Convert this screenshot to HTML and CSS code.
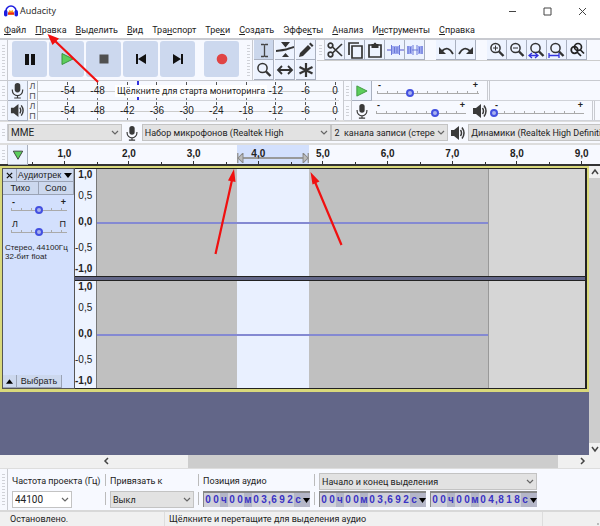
FILE: index.html
```html
<!DOCTYPE html>
<html lang="ru">
<head>
<meta charset="utf-8">
<title>Audacity</title>
<link rel="stylesheet" href="styles.css">
</head>
<body>
<svg class="defs" aria-hidden="true">
  <symbol id="mic" viewBox="0 0 16 18"><rect x="5" y="1" width="6" height="10" rx="3" fill="#3a3a3a"/><path d="M2.500 8v1a5.500 5.500 0 0 0 11 0V8M8 14v3M4.500 17h7" fill="none" stroke="#3a3a3a" stroke-width="1.300"/></symbol>
  <symbol id="speaker" viewBox="0 0 16 16"><path d="M1 5h3l5-4v14l-5-4H1z" fill="#3a3a3a"/><path d="M10.500 5q2 3 0 6M12 2.500q4 5.500 0 11" fill="none" stroke="#3a3a3a" stroke-width="1.500"/></symbol>
  <symbol id="lens" viewBox="0 0 18 18"><circle cx="7.500" cy="7" r="4.600" fill="none" stroke="#333" stroke-width="1.500"/><path d="M11 10.500l4.500 4.500" stroke="#333" stroke-width="2.400"/></symbol>
  <symbol id="play" viewBox="0 0 14 14"><path d="M2 1.500L13 7 2 12.500z" fill="#5cce5c" stroke="#3a963e"/></symbol>
  <symbol id="chev" viewBox="0 0 8 6"><path d="M1 1l3 3 3-3" fill="none" stroke="#666" stroke-width="1.200"/></symbol>
</svg>

<header class="titlebar">
  <svg class="logo" viewBox="0 0 14 12"><path d="M2 7V6a5 5 0 0 1 10 0v1" fill="none" stroke="#1d1de0" stroke-width="1.600"/><rect y="5" width="3.500" height="6.500" rx="1.700" fill="#1d1de0"/><rect x="10.500" y="5" width="3.500" height="6.500" rx="1.700" fill="#1d1de0"/><path d="M4 8l1.500-3 1.500 1 1.500-1L10 8v2H4z" fill="#f6a51c"/><path d="M4 8.500h6" stroke="#e22" stroke-width="2"/></svg>
  <span class="app-name">Audacity</span>
  <button class="win" aria-label="Свернуть"><svg viewBox="0 0 9 9"><path d="M1 4.500h7"/></svg></button>
  <button class="win" aria-label="Развернуть"><svg viewBox="0 0 9 9"><path d="M1 1h7v7H1z"/></svg></button>
  <button class="win" aria-label="Закрыть"><svg viewBox="0 0 9 9"><path d="M1 1l7 7M8 1L1 8"/></svg></button>
</header>

<nav class="menu">
  <a href="#"><u>Ф</u>айл</a><a href="#"><u>П</u>равка</a><a href="#"><u>В</u>ыделить</a><a href="#"><u>В</u>ид</a><a href="#">Тра<u>н</u>спорт</a><a href="#">Тре<u>к</u>и</a><a href="#"><u>С</u>оздать</a><a href="#">Эффе<u>к</u>ты</a><a href="#"><u>А</u>нализ</a><a href="#">И<u>н</u>струменты</a><a href="#"><u>С</u>правка</a>
</nav>

<section class="toolbar">
  <div class="grip"></div>
  <div class="transport">
    <button aria-label="Пауза"><svg viewBox="0 0 14 14"><path d="M2 2h4v11H2zM8 2h4v11H8z" fill="#111"/></svg></button>
    <button aria-label="Воспроизвести"><svg viewBox="0 0 14 14"><use href="#play"/></svg></button>
    <button aria-label="Стоп"><svg viewBox="0 0 14 14"><path d="M2.500 2.500h9v9h-9z" fill="#505050"/></svg></button>
    <button aria-label="В начало"><svg viewBox="0 0 14 14"><path d="M2 2h2v10H2zM12 2v10L4 7z" fill="#111"/></svg></button>
    <button aria-label="В конец"><svg viewBox="0 0 14 14"><path d="M10 2h2v10h-2zM2 2v10l8-5z" fill="#111"/></svg></button>
    <button class="record" aria-label="Записать"><svg viewBox="0 0 14 14"><circle cx="7" cy="7" r="5.300" fill="#e04444"/></svg></button>
  </div>
  <div class="grip"></div>
  <div class="tools">
    <button class="tool on" aria-label="Выделение"><svg viewBox="0 0 18 18"><path d="M6 3.500h2.500L9.500 4l1-.5H13M9.500 4v11M6 15.500h2.500l1-.5 1 .5H13" fill="none" stroke="#444" stroke-width="1.300"/></svg></button>
    <button class="tool" aria-label="Огибающая"><svg viewBox="0 0 18 18"><path d="M5 1h9L9.500 6.500zM9.500 12l3.500 4H6z" fill="#333"/><path d="M0 10q8-1 10-1.500T18 6" fill="none" stroke="#333" stroke-width="2"/></svg></button>
    <button class="tool" aria-label="Рисование"><svg viewBox="0 0 18 18"><path d="M2 16l1-4 8-8 3 3-8 8zM12 3l1.500-1.500 3 3L15 6z" fill="#333"/></svg></button>
    <button class="tool" aria-label="Масштаб"><svg viewBox="0 0 18 18"><use href="#lens"/></svg></button>
    <button class="tool" aria-label="Сдвиг"><svg viewBox="0 0 18 18"><path d="M3 9h12M6 5L2 9l4 4M12 5l4 4-4 4" fill="none" stroke="#333" stroke-width="1.800"/></svg></button>
    <button class="tool" aria-label="Мультиинструмент"><svg viewBox="0 0 18 18"><path d="M9 2v14M2.500 6l13 6.500M15.500 6l-13 6.500" stroke="#333" stroke-width="2.200"/></svg></button>
  </div>
  <div class="edit-side">
    <div class="edit-row">
      <div class="grip"></div>
      <div class="group">
        <button class="tool" aria-label="Вырезать"><svg viewBox="0 0 18 18"><g fill="none" stroke="#333" stroke-width="1.700"><circle cx="4.500" cy="4.500" r="2.300"/><circle cx="4.500" cy="13.500" r="2.300"/><path d="M6.500 6L16 15M6.500 12L16 3"/></g></svg></button>
        <button class="tool" aria-label="Копировать"><svg viewBox="0 0 18 18"><path d="M6 5h10v12H6zM3 14V2h10" fill="none" stroke="#333" stroke-width="1.700"/></svg></button>
        <button class="tool" aria-label="Вставить"><svg viewBox="0 0 18 18"><path d="M3 4h12v12H3z" fill="none" stroke="#333" stroke-width="1.700"/><path d="M5.500 3h2q1.500-3 3 0h2v4h-7z" fill="#333"/></svg></button>
        <button class="tool" aria-label="Обрезать"><svg viewBox="0 0 18 18"><path d="M1 9h4M14 9h4" stroke="#55c"/><path d="M5 5h9v8H5z" fill="#9ea9f0"/><path d="M5.500 4v10M8.500 6v6M11 6v6M13.500 4v10" stroke="#6b78d8"/></svg></button>
        <button class="tool" aria-label="Тишина"><svg viewBox="0 0 18 18"><path d="M1 5h5v8H1zM12 5h5v8h-5z" fill="#9ea9f0"/><path d="M6 9h6M2 5v8M4.500 6v6M7 4v10M11 4v10M13.500 6v6M16 5v8" stroke="#6b78d8"/></svg></button>
      </div>
      <div class="group">
        <button class="tool" aria-label="Отменить"><svg viewBox="0 0 18 18"><path d="M5 10q6-6 11 3" fill="none" stroke="#333" stroke-width="1.800"/><path d="M2 6v7h7z" fill="#333"/></svg></button>
        <button class="tool" aria-label="Повторить"><svg viewBox="0 0 18 18"><path d="M13 10Q7 4 2 13" fill="none" stroke="#333" stroke-width="1.800"/><path d="M16 6v7H9z" fill="#333"/></svg></button>
      </div>
      <div class="group">
        <button class="tool" aria-label="Приблизить"><svg viewBox="0 0 18 18"><use href="#lens"/><path d="M5 7h5M7.500 4.500v5" stroke="#333"/></svg></button>
        <button class="tool" aria-label="Отдалить"><svg viewBox="0 0 18 18"><use href="#lens"/><path d="M5 7h5" stroke="#333"/></svg></button>
        <button class="tool" aria-label="Масштаб по выделению"><svg viewBox="0 0 18 18"><use href="#lens"/><path d="M1 14.500h9M4 12l-3 2.500L4 17M7 12l3 2.500L7 17" fill="none" stroke="#33d" stroke-width="1.300"/></svg></button>
        <button class="tool" aria-label="Весь проект"><svg viewBox="0 0 18 18"><use href="#lens"/><path d="M1 14.500h10M1 12v5M11 12v5" fill="none" stroke="#33d" stroke-width="1.300"/></svg></button>
        <button class="tool" aria-label="Переключить масштаб"><svg viewBox="0 0 18 18"><g fill="none" stroke="#222" stroke-width="1.700"><circle cx="10" cy="6" r="3.500"/><circle cx="6.500" cy="9" r="3.300"/><path d="M12 8.500l4 4M9 11l4 4"/></g></svg></button>
      </div>
    </div>
  </div>
</section>

<section class="meters">
  <div class="meter-list">
    <div class="meter-row">
      <div class="grip"></div>
      <button class="tool" aria-label="Уровень записи"><svg viewBox="0 0 16 18"><use href="#mic"/></svg></button>
      <div class="lr"><span>Л</span><span>П</span></div>
      <div class="scale peak"><div class="marks"><span>-54</span><span>-48</span><span></span><span></span><span></span><span></span><span></span><span>-12</span><span>-6</span><span>0</span></div><button class="monitor">Щёлкните для старта мониторинга</button></div>
    </div>
    <div class="meter-row">
      <div class="grip"></div>
      <button class="tool" aria-label="Уровень воспроизведения"><svg viewBox="0 0 16 16"><use href="#speaker"/></svg></button>
      <div class="lr"><span>Л</span><span>П</span></div>
      <div class="scale"><div class="marks"><span>-54</span><span>-48</span><span>-42</span><span>-36</span><span>-30</span><span>-24</span><span>-18</span><span>-12</span><span>-6</span><span>0</span></div></div>
    </div>
  </div>
  <div class="mixer">
    <div class="mix-row">
      <div class="grip"></div>
      <button class="tool" aria-label="Воспроизвести на скорости"><svg viewBox="0 0 14 14"><use href="#play"/></svg></button>
      <label class="slider speed"><span class="ends"><b>-</b><b>+</b></span><input type="range" min="0" max="100" value="32" aria-label="Скорость"></label>
      <div class="stop"></div>
    </div>
    <div class="mix-row">
      <div class="grip"></div>
      <svg class="pic" viewBox="0 0 16 18"><use href="#mic"/></svg>
      <label class="slider"><span class="ends"><b>-</b><b>+</b></span><input type="range" min="0" max="100" value="66" aria-label="Громкость записи"></label>
      <svg class="pic" viewBox="0 0 16 16"><use href="#speaker"/></svg>
      <label class="slider"><span class="ends"><b>-</b><b>+</b></span><input type="range" min="0" max="100" value="0" aria-label="Громкость воспроизведения"></label>
      <div class="stop"></div>
    </div>
  </div>
</section>

<section class="devices">
  <div class="grip"></div>
  <div class="drop host"><select aria-label="Аудиоинтерфейс"><option>MME</option></select><svg><use href="#chev"/></svg></div>
  <svg class="pic" viewBox="0 0 16 18"><use href="#mic"/></svg>
  <div class="drop input"><select aria-label="Устройство записи"><option>Набор микрофонов (Realtek High</option></select><svg><use href="#chev"/></svg></div>
  <div class="drop channels"><select aria-label="Каналы записи"><option>2&nbsp; канала записи (стерес</option></select><svg><use href="#chev"/></svg></div>
  <svg class="pic" viewBox="0 0 16 16"><use href="#speaker"/></svg>
  <div class="drop output"><select aria-label="Устройство воспроизведения"><option>Динамики (Realtek High Definition)</option></select></div>
</section>

<section class="timeline">
  <div class="grip"></div>
  <button class="tool" aria-label="Закрепить указатель"><svg viewBox="0 0 14 14"><path d="M1.500 2.500h11L7 12z" fill="#5cce5c" stroke="#333"/></svg></button>
  <div class="ruler">
    <div class="range"><svg preserveAspectRatio="none" viewBox="0 0 72 10"><path d="M.5 0v10M71.500 0v10M1 5h70" stroke="#999" stroke-width="2"/><path d="M1 5l5-5v10zM71 5l-5-5v10z" fill="#bbb" stroke="#888"/></svg></div>
    <div class="seconds"><span>1,0</span><span>2,0</span><span>3,0</span><span>4,0</span><span>5,0</span><span>6,0</span><span>7,0</span><span>8,0</span><span>9,0</span></div>
  </div>
</section>

<main class="workspace">
  <div class="canvas">
    <article class="track">
      <aside class="panel">
        <div class="panel-row"><button class="close" aria-label="Закрыть дорожку"><svg viewBox="0 0 8 8"><path d="M1 1l6 6M7 1L1 7" stroke="#111" stroke-width="1.500"/></svg></button><button class="name">Аудиотрек <svg viewBox="0 0 8 5"><path d="M0 0h8L4 5z"/></svg></button></div>
        <div class="panel-row"><button>Тихо</button><button>Соло</button></div>
        <label class="slider"><span class="ends"><b>-</b><b>+</b></span><input type="range" value="50" aria-label="Усиление"></label>
        <label class="slider"><span class="ends"><span>Л</span><span>П</span></span><input type="range" value="50" aria-label="Панорама"></label>
        <p>Стерео, 44100Гц<br>32-бит float</p>
        <div class="panel-row foot"><button class="close" aria-label="Свернуть дорожку"><svg viewBox="0 0 8 5"><path d="M0 5h8L4 0z"/></svg></button><button class="pick">Выбрать</button></div>
      </aside>
      <div class="waves">
        <div class="channel">
          <div class="levels"><b>1,0</b><span>0,5</span><b>0,0</b><span>-0,5</span><b>-1,0</b></div>
          <div class="clip"><div class="before"></div><div class="selected"></div><div class="after"></div></div>
          <div class="blank"></div>
        </div>
        <div class="channel">
          <div class="levels"><b>1,0</b><span>0,5</span><b>0,0</b><span>-0,5</span><b>-1,0</b></div>
          <div class="clip"><div class="before"></div><div class="selected"></div><div class="after"></div></div>
          <div class="blank"></div>
        </div>
      </div>
    </article>
  </div>
  <div class="vscroll"><button aria-label="Вверх"><svg viewBox="0 0 8 8"><path d="M1 6l3-4 3 4"/></svg></button><div class="thumb"></div><button aria-label="Вниз"><svg viewBox="0 0 8 8"><path d="M1 2l3 4 3-4"/></svg></button></div>
</main>

<div class="hscroll"><button aria-label="Влево"><svg viewBox="0 0 8 8"><path d="M5 1L2 4l3 3"/></svg></button><div class="track-h"></div><button aria-label="Вправо"><svg viewBox="0 0 8 8"><path d="M2 1l3 3-3 3"/></svg></button></div>

<section class="selection">
  <div class="grip"></div>
  <div class="field rate"><label for="rate">Частота проекта (Гц)</label><div class="drop white"><select id="rate"><option>44100</option></select><svg><use href="#chev"/></svg></div></div>
  <div class="bars"></div>
  <div class="field snap"><label for="snap">Привязать к</label><div class="drop"><select id="snap"><option>Выкл</option></select><svg><use href="#chev"/></svg></div></div>
  <div class="bars"></div>
  <div class="field"><span>Позиция аудио</span>
    <div class="time"><i>0</i><i>0</i><em>ч</em><i>0</i><i>0</i><em>м</em><i>0</i><i>3</i><s>,</s><i>6</i><i>9</i><i>2</i><em>с</em><button aria-label="Формат времени"><svg viewBox="0 0 7 5"><path d="M0 0h7L3.500 5z"/></svg></button></div></div>
  <div class="bars"></div>
  <div class="field span"><div class="drop"><select aria-label="Вид выделения"><option>Начало и конец выделения</option></select><svg><use href="#chev"/></svg></div>
    <div class="times">
      <div class="time"><i>0</i><i>0</i><em>ч</em><i>0</i><i>0</i><em>м</em><i>0</i><i>3</i><s>,</s><i>6</i><i>9</i><i>2</i><em>с</em><button aria-label="Формат времени"><svg viewBox="0 0 7 5"><path d="M0 0h7L3.500 5z"/></svg></button></div>
      <div class="time"><i>0</i><i>0</i><em>ч</em><i>0</i><i>0</i><em>м</em><i>0</i><i>4</i><s>,</s><i>8</i><i>1</i><i>8</i><em>с</em><button aria-label="Формат времени"><svg viewBox="0 0 7 5"><path d="M0 0h7L3.500 5z"/></svg></button></div>
    </div></div>
</section>

<footer class="status"><span class="state">Остановлено.</span><span class="hint">Щёлкните и перетащите для выделения аудио</span><span class="corner"></span></footer>

<svg class="arrows" viewBox="0 0 600 526" aria-hidden="true"><g stroke="#f01010" stroke-width="2.200"><path d="M98 82L54 40M215.500 254L232 180M341.500 245L315 182" fill="none"/></g><path d="M47.500 34l11.500 4.500-6.500 6.500zM234 169l1.500 13-7.500-1.500zM310.500 172l9 9.500-7 3z" fill="#f01010"/></svg>
</body>
</html>
```

FILE: styles.css
```css
* { box-sizing: border-box; }
html, body { margin: 0; height: 100%; }
body {
  display: flex; flex-direction: column; position: relative; overflow: hidden;
  min-height: 100vh; background: #f7f9ff; color: #222;
  font: 10px/12px "Liberation Sans", sans-serif;
}
button, select, input { font: inherit; color: inherit; margin: 0; padding: 0; }
button { border: 0; background: none; display: flex; align-items: center; justify-content: center; }
.defs { position: absolute; width: 0; height: 0; }

.titlebar { flex: none; height: 22px; display: flex; align-items: center; padding: 0 12px 0 4px; background: #fff; }
.logo { width: 14px; height: 12px; }
.app-name { flex: 1; margin-left: 2px; font: 9px/14px "Open Sans", sans-serif; }
.win { width: 11px; height: 14px; margin-left: 24px; }
.win svg { width: 9px; height: 9px; fill: none; stroke: #444; }

.menu { flex: none; height: 16px; display: flex; gap: 9px; padding: 1px 4px; background: #fff; font: 9px/14px Roboto, sans-serif; }
.menu a { color: #222; text-decoration: none; }

.grip { flex: none; width: 8px; border-right: 1px solid #c8cad0; background: repeating-linear-gradient(#f7f9ff 0 2px, #d0d2d8 2px 3px) 2px 3px / 3px calc(100% - 6px) no-repeat; }
.tool { flex: none; width: 20px; height: 20px; background: #edf3ff; border: solid; border-width: 0 1px 1px 0; border-color: #a9b0bf; }
.tool svg { width: 18px; height: 18px; }
.tool.on { background: #cbd7ec; }

.toolbar { flex: none; display: flex; height: 42px; border-top: 2px solid #c8cad0; }
.transport { display: flex; gap: 2px; padding: 1px 6px 2px 4px; }
.transport button { width: 35px; height: 36px; border-radius: 3px; background: #ccd8ee; }
.transport svg { width: 14px; height: 14px; }
.transport .record { margin-left: 7px; }
.tools { display: grid; grid-template-columns: repeat(3, 20px); gap: 0 1px; padding: 0 1px; }
.edit-side { flex: 1; }
.edit-row { display: flex; height: 21px; border-bottom: 1px solid #ccc; }
.group { display: flex; margin-right: 11px; }

.meters { flex: none; display: flex; height: 42px; border-top: 1px solid #c8cad0; border-bottom: 2px solid #ddd; }
.meter-list { flex: 0 1 344px; min-width: 0; padding-right: 4px; border-right: 1px solid #c8cad0; }
.meter-row, .mix-row { display: flex; height: 20px; border-bottom: 1px solid #d0d2d8; }
.meter-row .tool svg { width: 15px; height: 17px; }
.lr { width: 9px; display: flex; flex-direction: column; align-items: center; line-height: 10px; font-size: 9px; color: #555; }
.scale { flex: 1; position: relative; overflow: hidden; border-left: 1px solid #bbb; background: linear-gradient(#ccc, #ccc) 0 10px / 100% 1px no-repeat; }
.scale.peak { background: linear-gradient(#33d, #33d) 33% 0 / 2px 100% no-repeat, linear-gradient(#ccc, #ccc) 0 10px / 100% 1px no-repeat; }
.marks { display: grid; grid-template-columns: repeat(10, 1fr); margin: 0 -11px 0 15px; text-align: center; line-height: 20px; height: 20px; }
.marks span { background: linear-gradient(#555, #555) 50% 1px / 1px 3px no-repeat, linear-gradient(#777, #777) 50% 17px / 1px 2px no-repeat; }
.monitor { position: absolute; left: 77px; top: 4px; height: 12px; padding: 0 2px; background: #fff; font: 9px/12px Roboto, sans-serif; white-space: nowrap; }
.mixer { flex: 1; }
.mix-row .tool svg { width: 13px; height: 14px; }
.pic { flex: none; width: 16px; height: 16px; margin: 2px; }
.stop { width: 3px; border: solid #c8cad0; border-width: 0 1px; margin-left: 4px; }

.slider { display: flex; flex-direction: column; width: 98px; height: 18px; }
.slider.speed { width: 110px; margin-left: 1px; }
.ends { display: flex; justify-content: space-between; padding: 0 5px; height: 7px; line-height: 8px; font-size: 9px; }
.slider input { appearance: none; width: 100%; height: 10px; background: linear-gradient(#aaa, #aaa) 4px 5px / calc(100% - 8px) 1px no-repeat, repeating-linear-gradient(90deg, #aaa 0 1px, transparent 1px 10px) 4px 3px / calc(100% - 8px) 3px no-repeat; }
.slider input::-webkit-slider-thumb { appearance: none; width: 8px; height: 8px; border: 2px solid #4350e0; border-radius: 50%; background: #a9b2ee; }

.devices { flex: none; display: flex; height: 22px; padding: 2px 0; background: #f7f9ff; border-bottom: 1px solid #ddd; }
.drop { position: relative; height: 17px; min-width: 0; }
.drop select { appearance: none; display: block; width: 100%; height: 100%; padding: 0 12px 0 2px; border: 1px solid #c3c3c3; border-radius: 0; background: #e2e2e2; font: 9px/14px Roboto, sans-serif; }
.drop svg { position: absolute; right: 3px; top: 6px; width: 8px; height: 6px; }
.drop.white select { background: #fff; }
.devices .pic { margin: 1px 2px; }
.host { flex: 114; }
.input { flex: 190; }
.channels { flex: 117; }
.output { flex: 132; }
.output select { padding-right: 0; border-right: 0; }
.rate select, .devices .host select { font-size: 10px; }

.timeline { flex: none; display: flex; height: 22px; border-top: 1px solid #ddd; border-bottom: 2px solid #333; }
.timeline .tool svg { width: 14px; height: 12px; }
.ruler { flex: 1; position: relative; overflow: hidden; }
.range { position: absolute; left: 36.5%; width: 12.6%; top: 0; bottom: 0; background: #d3e0fd; }
.range svg { position: absolute; left: 0; top: 8px; width: 100%; height: 10px; }
.seconds { position: relative; display: grid; grid-template-columns: repeat(9, 1fr); margin: 0 -14px 0 4px; height: 19px; text-align: center; font-weight: bold; line-height: 18px; }
.seconds span { background: linear-gradient(#333, #333) 50% 100% / 1px 3px no-repeat, linear-gradient(#333, #333) 0 100% / 1px 2px no-repeat; }

.workspace { flex: 1; min-height: 0; display: flex; }
.canvas { flex: 1; background: #626688; }
.track { display: flex; height: 226px; border: 2px solid #d9d97b; border-bottom-width: 3px; }
.panel { flex: none; width: 73px; display: flex; flex-direction: column; background: #d3e0fd; border: 1px solid #555; }
.panel-row { display: flex; height: 13px; font-size: 9px; }
.panel-row button { flex: 1; background: #ccd8ee; border: solid #9aa3b5; border-width: 0 1px 1px 0; line-height: 12px; white-space: nowrap; }
.panel-row .close { flex: none; width: 14px; }
.panel-row .name { gap: 3px; }
.close svg { width: 7px; height: 7px; }
.name svg { width: 8px; height: 5px; }
.panel .slider { width: 64px; margin: 3px 0 1px 4px; }
.panel p { margin: 4px 0 0 2px; font-size: 8px; line-height: 9px; white-space: nowrap; }
.panel .foot { margin-top: auto; }
.foot .pick { flex: none; width: 45px; }

.waves { flex: 1; min-width: 0; display: flex; flex-direction: column; gap: 5px; background: #626688; border: 1px solid #222; border-left: 0; border-right-width: 2px; }
.channel { flex: 1; display: flex; box-shadow: 0 1px #222, 0 -1px #222; }
.levels { flex: none; width: 22px; display: grid; grid-template-rows: 12px 30px 22px 30px 12px; align-items: center; justify-items: end; padding-right: 4px; background: #edf3ff; border-right: 1px solid #777; }
.clip { flex: 391; position: relative; display: flex; border-right: 1px solid #999; }
.clip::after { content: ""; position: absolute; left: 0; right: 0; top: calc(50% - 1px); height: 2px; background: #8489d2; }
.before { flex: 140; background: #c0c0c0; }
.selected { flex: 72; background: #e9f0ff; }
.after { flex: 179; background: #c0c0c0; }
.blank { flex: 96; background: #d6d6d6; }

.vscroll { width: 11px; display: flex; flex-direction: column; background: #f0f0f0; }
.vscroll button, .hscroll button { height: 12px; width: 11px; }
.vscroll svg, .hscroll svg { width: 8px; height: 8px; fill: none; stroke: #444; stroke-width: 1.5; }
.thumb { flex: 1; background: #cdcdcd; }
.hscroll { flex: none; display: flex; height: 14px; background: #f0f0f0; padding: 0 12px 0 101px; border-bottom: 1px solid #ddd; }
.track-h { flex: 1; margin: 0 19px 0 76px; background: #cdcdcd; }

.selection { flex: none; display: flex; height: 41px; gap: 4px; }
.field { display: flex; flex-direction: column; padding-top: 4px; white-space: nowrap; }
.field > label, .field > span { height: 18px; font: 9px/16px Roboto, sans-serif; }
.rate { width: 89px; }
.rate .drop { width: 60px; }
.snap { width: 84px; }
.bars { width: 1px; margin: 5px 0; background: linear-gradient(#bbb 12px, transparent 12px 18px, #bbb 18px); }
.time { display: flex; width: 107px; height: 16px; background: #cfd0d8; border: solid #888; border-width: 2px 0 0 1px; color: #3a33c4; line-height: 14px; font-weight: bold; }
.time > * { flex: none; width: 8px; text-align: center; font-style: normal; text-decoration: none; }
.time s { width: 2px; }
.time em { background: #b4b6c8; }
.time button { background: #b4b6c8; }
.time svg { width: 7px; height: 5px; }
.times { display: flex; gap: 4px; }
.span .drop { margin-bottom: 1px; }

.status { flex: none; display: flex; height: 16px; border-top: 2px solid #d8d8d8; background: #f0f0f0; padding-left: 10px; font: 9px/14px Roboto, sans-serif; }
.state { width: 155px; border-right: 1px solid #ddd; }
.hint { flex: 1; padding-left: 4px; }
.corner { width: 58px; border-left: 1px solid #ddd; background: radial-gradient(circle at 1px 1px, #bbb 1px, transparent 1px) 100% 100% / 3px 3px no-repeat; }

.arrows { position: absolute; left: 0; top: 0; width: 600px; height: 526px; pointer-events: none; }
```
